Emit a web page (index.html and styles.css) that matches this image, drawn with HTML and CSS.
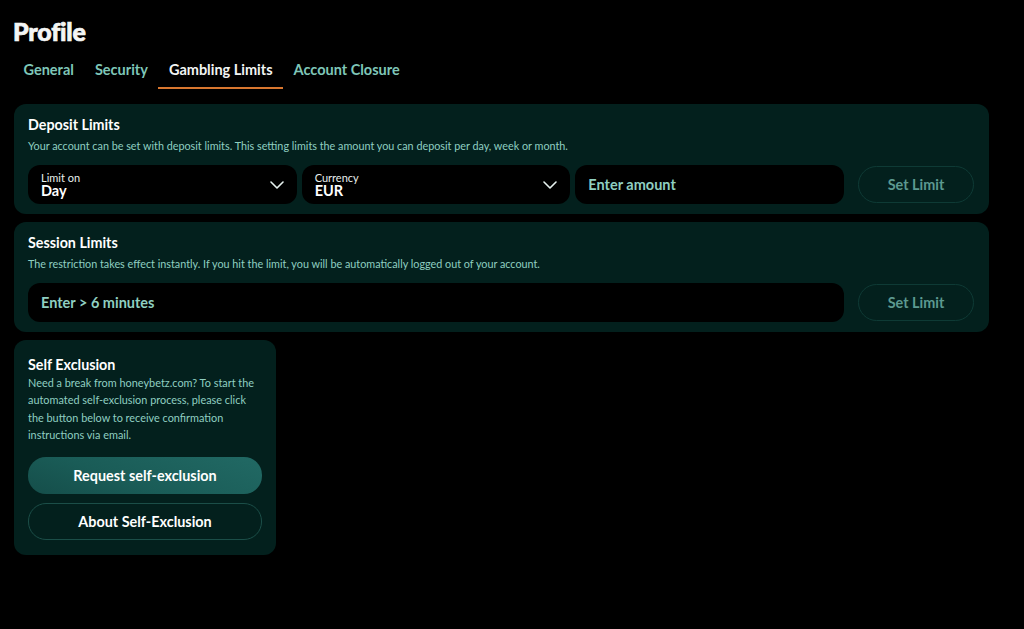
FILE: index.html
```html
<!DOCTYPE html>
<html lang="en">
<head>
<meta charset="utf-8">
<title>Profile</title>
<link rel="stylesheet" href="styles.css">
</head>
<body>
<main class="page">
  <h1 class="title">Profile</h1>
  <nav class="tabs">
    <a class="tab">General</a>
    <a class="tab">Security</a>
    <a class="tab tab-active">Gambling Limits</a>
    <a class="tab">Account Closure</a>
  </nav>

  <section class="card">
    <h2 class="card-title">Deposit Limits</h2>
    <p class="card-desc">Your account can be set with deposit limits. This setting limits the amount you can deposit per day, week or month.</p>
    <div class="row">
      <div class="fields">
        <div class="field select">
          <div class="select-text">
            <span class="field-label">Limit on</span>
            <span class="field-value">Day</span>
          </div>
          <svg class="chevron" width="14" height="8" viewBox="0 0 14 8"><path d="M1 1l6 6 6-6" fill="none" stroke="#e6f2ef" stroke-width="1.6" stroke-linecap="round" stroke-linejoin="round"/></svg>
        </div>
        <div class="field select">
          <div class="select-text">
            <span class="field-label">Currency</span>
            <span class="field-value">EUR</span>
          </div>
          <svg class="chevron" width="14" height="8" viewBox="0 0 14 8"><path d="M1 1l6 6 6-6" fill="none" stroke="#e6f2ef" stroke-width="1.6" stroke-linecap="round" stroke-linejoin="round"/></svg>
        </div>
        <div class="field">
          <span class="placeholder">Enter amount</span>
        </div>
      </div>
      <button class="btn-outline">Set Limit</button>
    </div>
  </section>

  <section class="card">
    <h2 class="card-title">Session Limits</h2>
    <p class="card-desc">The restriction takes effect instantly. If you hit the limit, you will be automatically logged out of your account.</p>
    <div class="row">
      <div class="fields">
        <div class="field">
          <span class="placeholder">Enter &gt; 6 minutes</span>
        </div>
      </div>
      <button class="btn-outline">Set Limit</button>
    </div>
  </section>

  <section class="card card-small">
    <h2 class="card-title">Self Exclusion</h2>
    <p class="card-text">Need a break from honeybetz.com? To start the<br>automated self-exclusion process, please click<br>the button below to receive confirmation<br>instructions via email.</p>
    <button class="btn-primary">Request self-exclusion</button>
    <button class="btn-ghost">About Self-Exclusion</button>
  </section>
</main>
</body>
</html>
```

FILE: styles.css
```css
* {
  box-sizing: border-box;
}

html, body {
  margin: 0;
  background: #000;
}

body {
  font-family: Lato, "Noto Sans", sans-serif;
  color: #fff;
}

.page {
  padding: 0 35px 0 14px;
}

.title {
  margin: 0 0 0 -1px;
  padding-top: 17px;
  font-size: 25px;
  line-height: 28px;
  font-weight: 900;
  letter-spacing: -0.2px;
  color: #f4f6f5;
  -webkit-text-stroke: 0.7px #f4f6f5;
}

.tabs {
  display: flex;
  margin: 0 0 15px -1px;
  padding-top: 7px;
}

.tab {
  padding: 9px 10.5px 9px;
  font-size: 14.5px;
  line-height: 17px;
  font-weight: 700;
  color: #7fc6b8;
  border-bottom: 2px solid transparent;
}

.tab-active {
  color: #f2f5f4;
  border-bottom-color: #d9772f;
}

.card {
  background: #03201d;
  border-radius: 12px;
  padding: 12px 15px 10px 14px;
  margin-bottom: 8px;
}

.card-title {
  margin: 0;
  font-size: 14.3px;
  line-height: 18px;
  font-weight: 700;
  color: #fff;
}

.card-desc {
  margin: 5px 0 12px;
  font-size: 10.8px;
  line-height: 14px;
  color: #8fcfc1;
}

.row {
  display: flex;
  align-items: center;
}

.fields {
  flex: 1;
  display: flex;
  gap: 5px;
}

.field {
  flex: 1;
  height: 39px;
  background: #000;
  border-radius: 12px;
  padding: 0 13px;
  display: flex;
  align-items: center;
}

.select {
  justify-content: space-between;
}

.select-text {
  display: flex;
  flex-direction: column;
  padding-top: 1px;
}

.field-label {
  font-size: 11px;
  line-height: 11px;
  color: #e8efed;
}

.field-value {
  font-size: 14.5px;
  line-height: 15px;
  font-weight: 700;
  color: #fff;
}

.placeholder {
  font-size: 14.5px;
  font-weight: 700;
  color: #8fcfc1;
}

.btn-outline {
  width: 116px;
  height: 37px;
  margin-left: 14px;
  border-radius: 19px;
  border: 1px solid #0e3a35;
  background: transparent;
  font-family: inherit;
  font-size: 14.4px;
  font-weight: 700;
  color: #5c9990;
}

.card-small {
  width: 262px;
  padding: 16px 14px 15px;
}

.card-text {
  margin: 0 0 14px;
  font-size: 10.9px;
  line-height: 17.3px;
  color: #8fcfc1;
}

.btn-primary,
.btn-ghost {
  display: block;
  width: 100%;
  height: 37px;
  border-radius: 18px;
  font-family: inherit;
  font-size: 14.4px;
  font-weight: 700;
  color: #fff;
}

.btn-primary {
  border: none;
  background: linear-gradient(200deg, #216964 0%, #1a5c57 60%, #154e4a 100%);
  margin-bottom: 9px;
}

.btn-ghost {
  border: 1px solid #1b4e48;
  background: transparent;
}
```
